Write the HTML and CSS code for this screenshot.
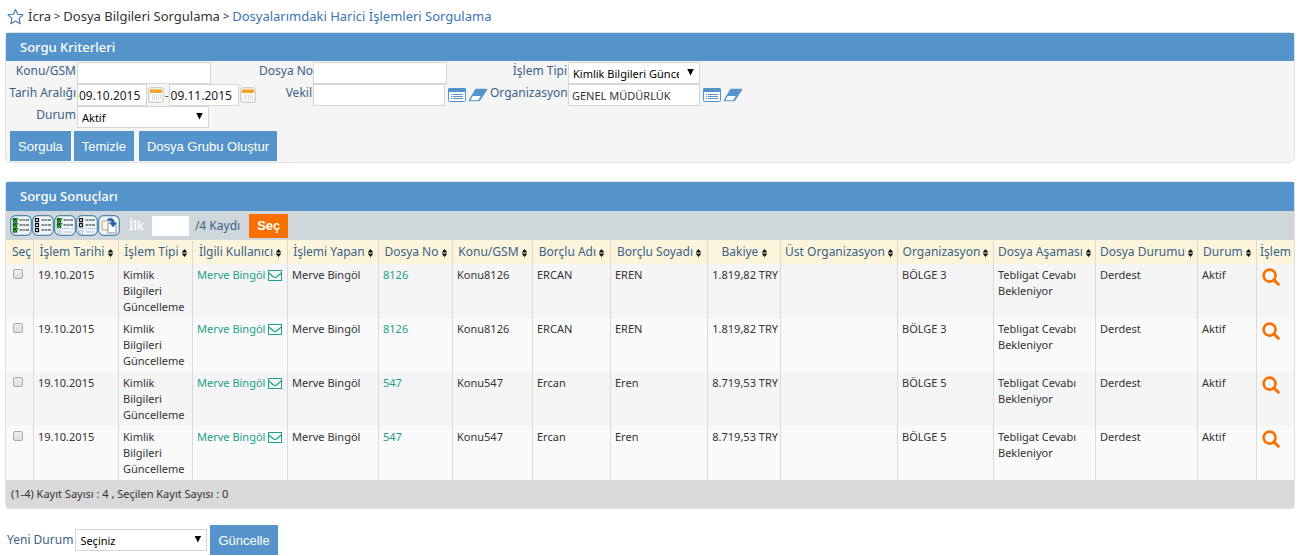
FILE: index.html
```html
<!DOCTYPE html>
<html lang="tr">
<head>
<meta charset="utf-8">
<title>Dosyalarımdaki Harici İşlemleri Sorgulama</title>
<link rel="stylesheet" href="styles.css">
</head>
<body>
<svg class="defs" aria-hidden="true">
  <symbol id="i-calendar" viewBox="0 0 16 16">
    <rect x=".5" y=".5" width="15" height="15" rx="2" fill="#ece8e2" stroke="#d3d0cb"/>
    <path d="M2 2h12v12H2z" fill="#fff"/><path d="M2 2h12v4H2z" fill="#f0a62c"/><path d="M2 2h12v1H2z" fill="#f8c56c"/>
    <path d="M4.500 7v6M6.500 7v6M8.500 7v6M10.500 7v6M12.500 7v6" stroke="#dfdcd8" stroke-width="1"/>
  </symbol>
  <symbol id="i-list" viewBox="0 0 18 14">
    <rect x=".5" y=".5" width="17" height="13" rx="1" fill="#fff" stroke="#5594ca"/>
    <path d="M0 1.500Q0 0 1.500 0h15Q18 0 18 1.500V4H0z" fill="#5594ca"/>
    <path d="M3 6.500h1M3 8.500h1M3 10.500h1M5 6.500h10M5 8.500h10M5 10.500h10" stroke="#5594ca"/>
  </symbol>
  <symbol id="i-eraser" viewBox="0 0 20 14">
    <path d="M8 .7h10.500q1.300 0 .6 1.200L12.500 12q-.8 1.300-2.300 1.300H1.300Q0 13.300.8 12L7 1.500Q7.500.7 8 .7z" fill="#5594ca"/>
    <path d="M4.800 8h8L10.500 11.700Q10.200 12.200 9.500 12.200H2.300z" fill="#fff"/>
  </symbol>
  <symbol id="i-mail" viewBox="0 0 14 12">
    <rect x=".5" y="1.500" width="13" height="10" fill="none" stroke="#22a085"/>
    <path d="M.8 4L5.500 8Q7 9 8.500 8L13.200 4" fill="none" stroke="#22a085" stroke-width="1.200"/>
  </symbol>
  <symbol id="i-search" viewBox="0 0 18 18">
    <circle cx="7.600" cy="7.600" r="6" fill="none" stroke="#fa7000" stroke-width="2.600"/>
    <path d="M12 12l4.300 4.300" stroke="#fa7000" stroke-width="3" stroke-linecap="round"/>
  </symbol>
  <symbol id="i-sort" viewBox="0 0 5 8"><path d="M0 3L2.500 0 5 3v.5H0zM0 5v-.5h5V5L2.500 8z" fill="#111"/></symbol>
  <symbol id="frame" viewBox="0 0 22 21">
    <rect x=".7" y=".7" width="20.600" height="19.600" rx="5" fill="#eff5fa" stroke="#4b86ad" stroke-width="1.200"/>
  </symbol>
  <symbol id="line-off" viewBox="0 0 18 5">
    <path d="M1.500.7h3v3h-3z" fill="#fff" stroke="#111" stroke-width="1.200"/>
    <path d="M7.500 2h3m.6 0h2m.6 0h3.300" stroke="#666" stroke-width="1.300"/>
  </symbol>
  <symbol id="line-on" viewBox="0 0 18 5">
    <path d="M.8.2h4.400v4.400H.8z" fill="#0d2e10"/><path d="M1.300 2l1.500 1.500L6.300 0" fill="none" stroke="#1bb51b" stroke-width="1.500"/>
    <path d="M7.500 2h3m.6 0h2m.6 0h3.300" stroke="#666" stroke-width="1.300"/>
  </symbol>
  <symbol id="line-faded" viewBox="0 0 18 5">
    <path d="M1.500.7h3v3h-3z" fill="#fff" stroke="#a9b9cb"/><path d="M7.500 2h9" stroke="#bdd0e4" stroke-width="1.200"/>
  </symbol>
</svg>

<nav class="crumbs" aria-label="Konum">
  <svg class="star" viewBox="0 0 18 17"><path d="M9 1l2.300 5.100 5.700.6-4.200 3.900 1.200 5.600L9 13.300 4 16.200l1.200-5.600L1 6.700l5.700-.6z" fill="none" stroke="#3a74b2" stroke-width="1.100" stroke-linejoin="round"/></svg>
  <span>İcra</span><span class="sep">&gt;</span><span>Dosya Bilgileri Sorgulama</span><span class="sep">&gt;</span><a href="#">Dosyalarımdaki Harici İşlemleri Sorgulama</a>
</nav>

<section class="panel criteria">
  <h2 class="panel-title">Sorgu Kriterleri</h2>
  <form>
    <div class="fields">
      <label for="konu">Konu/GSM</label>
      <div class="field"><input class="box wide" id="konu" type="text"></div>
      <label for="dosya">Dosya No</label>
      <div class="field"><input class="box wide" id="dosya" type="text"></div>
      <label for="tip">İşlem Tipi</label>
      <div class="field"><span class="pick"><select class="box" id="tip"><option>Kimlik Bilgileri Güncelleme</option></select></span></div>

      <label for="tarih">Tarih Aralığı</label>
      <div class="field dates">
        <input class="box date" id="tarih" type="text" value="09.10.2015">
        <button class="icon" type="button" aria-label="Başlangıç takvimi"><svg class="cal"><use href="#i-calendar"/></svg></button>
        <span>-</span>
        <input class="box date" type="text" value="09.11.2015" aria-label="Bitiş tarihi">
        <button class="icon" type="button" aria-label="Bitiş takvimi"><svg class="cal"><use href="#i-calendar"/></svg></button>
      </div>
      <label for="vekil">Vekil</label>
      <div class="field lookup">
        <input class="box" id="vekil" type="text">
        <button class="icon" type="button" aria-label="Vekil seç"><svg class="list"><use href="#i-list"/></svg></button>
        <button class="icon" type="button" aria-label="Vekil temizle"><svg class="eraser"><use href="#i-eraser"/></svg></button>
      </div>
      <label for="org">Organizasyon</label>
      <div class="field lookup">
        <input class="box" id="org" type="text" value="GENEL MÜDÜRLÜK">
        <button class="icon" type="button" aria-label="Organizasyon seç"><svg class="list"><use href="#i-list"/></svg></button>
        <button class="icon" type="button" aria-label="Organizasyon temizle"><svg class="eraser"><use href="#i-eraser"/></svg></button>
      </div>

      <label for="durum">Durum</label>
      <div class="field"><span class="pick"><select class="box" id="durum"><option>Aktif</option></select></span></div>
    </div>
    <div class="actions">
      <button class="btn" type="button">Sorgula</button>
      <button class="btn" type="button">Temizle</button>
      <button class="btn spaced" type="button">Dosya Grubu Oluştur</button>
    </div>
  </form>
</section>

<section class="panel results">
  <h2 class="panel-title tall">Sorgu Sonuçları</h2>
  <div class="toolbar">
    <div class="tools">
      <button class="icon" type="button" aria-label="Tümünü seç"><svg class="tool" viewBox="0 0 22 21"><use href="#frame"/><use href="#line-on" x="2" y="3" width="18" height="5"/><use href="#line-on" x="2" y="8" width="18" height="5"/><use href="#line-on" x="2" y="13" width="18" height="5"/></svg></button>
      <button class="icon" type="button" aria-label="Tümünü bırak"><svg class="tool" viewBox="0 0 22 21"><use href="#frame"/><use href="#line-off" x="2" y="3" width="18" height="5"/><use href="#line-off" x="2" y="8" width="18" height="5"/><use href="#line-off" x="2" y="13" width="18" height="5"/></svg></button>
      <button class="icon" type="button" aria-label="Sayfayı seç"><svg class="tool" viewBox="0 0 22 21"><use href="#frame"/><use href="#line-on" x="2" y="3" width="18" height="5"/><use href="#line-on" x="2" y="8" width="18" height="5"/><path d="M2 13.500h18" stroke="#80b0e0" stroke-dasharray="1 1"/><use href="#line-faded" x="2" y="15" width="18" height="5"/></svg></button>
      <button class="icon" type="button" aria-label="Sayfayı bırak"><svg class="tool" viewBox="0 0 22 21"><use href="#frame"/><use href="#line-off" x="2" y="3" width="18" height="5"/><use href="#line-off" x="2" y="8" width="18" height="5"/><path d="M2 13.500h18" stroke="#80b0e0" stroke-dasharray="1 1"/><use href="#line-faded" x="2" y="15" width="18" height="5"/></svg></button>
      <button class="icon" type="button" aria-label="Seçimi çevir"><svg class="tool" viewBox="0 0 22 21"><use href="#frame"/><path d="M4 6h7v9H4z" fill="#fbf6e4" stroke="#b9a98a"/><path d="M10 8h8v10h-8z" fill="#fff" stroke="#8590a8"/><path d="M9 5c3-3 7-2 7.500 3h2L15 12l-3-4h2c0-2-2-3-5-3z" fill="#2c65b8" stroke="#1d4c99" stroke-width=".6"/></svg></button>
    </div>
    <label class="first" for="ilk">İlk</label>
    <input class="count" id="ilk" type="text">
    <span class="total">/4 Kaydı</span>
    <button class="btn go" type="button">Seç</button>
  </div>
  <table>
    <colgroup><col class="c-sel"><col class="c-date"><col class="c-tip"><col class="c-kul"><col class="c-yapan"><col class="c-tip"><col class="c-konu"><col class="c-ad"><col class="c-soyad"><col class="c-bakiye"><col class="c-ust"><col class="c-org"><col class="c-asama"><col class="c-asama"><col class="c-durum"><col class="c-islem"></colgroup>
    <thead><tr>
      <th>Seç</th>
      <th>İşlem Tarihi <svg><use href="#i-sort"/></svg></th>
      <th>İşlem Tipi <svg><use href="#i-sort"/></svg></th>
      <th>İlgili Kullanıcı <svg><use href="#i-sort"/></svg></th>
      <th>İşlemi Yapan <svg><use href="#i-sort"/></svg></th>
      <th>Dosya No <svg><use href="#i-sort"/></svg></th>
      <th>Konu/GSM <svg><use href="#i-sort"/></svg></th>
      <th>Borçlu Adı <svg><use href="#i-sort"/></svg></th>
      <th>Borçlu Soyadı <svg><use href="#i-sort"/></svg></th>
      <th>Bakiye <svg><use href="#i-sort"/></svg></th>
      <th>Üst Organizasyon <svg><use href="#i-sort"/></svg></th>
      <th>Organizasyon <svg><use href="#i-sort"/></svg></th>
      <th>Dosya Aşaması <svg><use href="#i-sort"/></svg></th>
      <th>Dosya Durumu <svg><use href="#i-sort"/></svg></th>
      <th>Durum <svg><use href="#i-sort"/></svg></th>
      <th>İşlem</th>
    </tr></thead>
    <tbody>
      <tr><td class="sel"><input type="checkbox" aria-label="Kayıt 1"></td><td>19.10.2015</td><td>Kimlik Bilgileri Güncelleme</td><td class="user"><a href="#">Merve Bingöl <svg><use href="#i-mail"/></svg></a></td><td>Merve Bingöl</td><td><a href="#">8126</a></td><td>Konu8126</td><td>ERCAN</td><td>EREN</td><td class="num">1.819,82 TRY</td><td></td><td>BÖLGE 3</td><td>Tebligat Cevabı Bekleniyor</td><td>Derdest</td><td>Aktif</td><td><button class="icon" type="button" aria-label="İncele"><svg class="search"><use href="#i-search"/></svg></button></td></tr>
      <tr><td class="sel"><input type="checkbox" aria-label="Kayıt 2"></td><td>19.10.2015</td><td>Kimlik Bilgileri Güncelleme</td><td class="user"><a href="#">Merve Bingöl <svg><use href="#i-mail"/></svg></a></td><td>Merve Bingöl</td><td><a href="#">8126</a></td><td>Konu8126</td><td>ERCAN</td><td>EREN</td><td class="num">1.819,82 TRY</td><td></td><td>BÖLGE 3</td><td>Tebligat Cevabı Bekleniyor</td><td>Derdest</td><td>Aktif</td><td><button class="icon" type="button" aria-label="İncele"><svg class="search"><use href="#i-search"/></svg></button></td></tr>
      <tr><td class="sel"><input type="checkbox" aria-label="Kayıt 3"></td><td>19.10.2015</td><td>Kimlik Bilgileri Güncelleme</td><td class="user"><a href="#">Merve Bingöl <svg><use href="#i-mail"/></svg></a></td><td>Merve Bingöl</td><td><a href="#">547</a></td><td>Konu547</td><td>Ercan</td><td>Eren</td><td class="num">8.719,53 TRY</td><td></td><td>BÖLGE 5</td><td>Tebligat Cevabı Bekleniyor</td><td>Derdest</td><td>Aktif</td><td><button class="icon" type="button" aria-label="İncele"><svg class="search"><use href="#i-search"/></svg></button></td></tr>
      <tr><td class="sel"><input type="checkbox" aria-label="Kayıt 4"></td><td>19.10.2015</td><td>Kimlik Bilgileri Güncelleme</td><td class="user"><a href="#">Merve Bingöl <svg><use href="#i-mail"/></svg></a></td><td>Merve Bingöl</td><td><a href="#">547</a></td><td>Konu547</td><td>Ercan</td><td>Eren</td><td class="num">8.719,53 TRY</td><td></td><td>BÖLGE 5</td><td>Tebligat Cevabı Bekleniyor</td><td>Derdest</td><td>Aktif</td><td><button class="icon" type="button" aria-label="İncele"><svg class="search"><use href="#i-search"/></svg></button></td></tr>
    </tbody>
  </table>
  <p class="summary">(1-4) Kayıt Sayısı : 4 , Seçilen Kayıt Sayısı : 0</p>
</section>

<form class="update">
  <label for="yeni">Yeni Durum</label>
  <span class="pick"><select class="box" id="yeni"><option>Seçiniz</option></select></span>
  <button class="btn" type="button">Güncelle</button>
</form>
</body>
</html>
```
FILE: styles.css
```css
* { box-sizing: border-box; }
body {
  margin: 0;
  padding: 0 8px 0 5px;
  background: #fff;
  color: #333;
  font: 11px/16px "Noto Sans", sans-serif;
}
svg { display: block; }
a { color: #22a085; text-decoration: none; }
label { color: #3b6288; font-size: 12px; }
.defs { position: absolute; width: 0; height: 0; }

.crumbs {
  display: flex;
  align-items: center;
  gap: 3px;
  height: 32px;
  padding-left: 2px;
  font-size: 13px;
}
.crumbs a { color: #3a74b2; }
.sep { font-size: 11px; }
.star { width: 17px; height: 17px; margin-right: 1px; }

.panel {
  border: 1px solid #e0e0e0;
  border-radius: 6px;
  background: #f5f5f5;
}
.panel-title {
  margin: 0;
  padding-left: 14px;
  background: #5594ca;
  color: #fff;
  font-size: 13px;
  font-weight: 500;
  line-height: 28px;
}
.panel-title.tall { line-height: 29px; }

.fields {
  display: grid;
  grid-template-columns: 70px 181px 53px 176px 77px auto;
  grid-auto-rows: 22px;
  justify-content: start;
  column-gap: 1px;
  padding-top: 1px;
}
.fields label { line-height: 18px; text-align: right; white-space: nowrap; }
.field { display: flex; align-items: center; }
.box {
  width: 132px;
  height: 22px;
  padding: 1px 3px 0;
  border: 1px solid #d6d6d6;
  border-radius: 0;
  background: #fff;
  color: #333;
  font: 11px "Noto Sans", sans-serif;
}
.box.wide { width: 134px; }
.box.date { width: 70px; padding: 1px; color: #222; font-size: 12px; }
.dates .icon { padding: 0 1px; }
.lookup .icon { margin-left: 3px; }
.lookup .icon + .icon { margin-left: 2px; }
.icon { padding: 0; border: 0; background: none; cursor: pointer; }
.cal { width: 16px; height: 16px; }
.list { width: 18px; height: 14px; }
.eraser { width: 20px; height: 14px; }
.pick { display: inline-grid; align-items: center; }
.pick > *, .pick::after { grid-area: 1 / 1; }
.pick::after {
  content: "";
  width: 7px;
  height: 7px;
  margin: 0 6px 2px 0;
  justify-self: end;
  background: #000;
  clip-path: polygon(0 0, 100% 0, 50% 100%);
  pointer-events: none;
}
.pick .box { padding: 1px 20px 0 4px; color: #000; appearance: none; }

.actions { display: flex; gap: 3px; padding: 3px 4px 1px; }
.btn {
  height: 30px;
  padding: 0 8px;
  border: 0;
  background: #5594ca;
  color: #fff;
  font: 13px "Liberation Sans", Arial, sans-serif;
  cursor: pointer;
}
.btn.spaced { margin-left: 2px; }

.results { margin-top: 18px; }
.toolbar {
  display: flex;
  align-items: center;
  height: 29px;
  padding: 0 4px;
  background: #cfd7da;
  font-size: 12px;
}
.tools { display: flex; }
.tool { width: 22px; height: 21px; }
.first { margin: 0 8px 0 9px; color: #fff; font-weight: 600; }
.count { width: 37px; height: 20px; padding: 2px; border: 0; background: #fff; font: inherit; }
.total { margin: 0 9px 0 6px; color: #3b6288; }
.btn.go { height: 24px; background: #fa7000; font-weight: 700; }

table { width: 100%; table-layout: fixed; border-collapse: separate; border-spacing: 0; }
th, td { border-left: 1px solid #dadada; text-align: left; vertical-align: top; }
th:first-child, td:first-child { border-left: 0; }
th {
  height: 24px;
  padding: 0 1px;
  background: #fcf5dc;
  color: #3b6288;
  font-size: 12px;
  font-weight: 400;
  line-height: 24px;
  text-align: center;
  white-space: nowrap;
}
th:first-child { padding: 0 0 0 4px; }
th:last-child { padding: 0; }
th svg { display: inline-block; width: 5px; height: 8px; vertical-align: -1px; }
td { height: 54px; padding: 3px 2px 3px 4px; }
tbody tr:nth-child(even) { background: #fafafa; }
.sel { padding: 5px 7px; }
.sel input {
  display: block;
  width: 10px;
  height: 10px;
  margin: 0;
  border: 1px solid #aaa;
  border-radius: 2px;
  background: linear-gradient(#eee, #ddd);
  appearance: none;
}
.user { white-space: nowrap; }
.user svg { display: inline-block; width: 14px; height: 12px; vertical-align: -2px; }
.num { text-align: right; }
.search { width: 18px; height: 18px; }
td:last-child { padding-top: 4px; padding-left: 5px; }
.c-sel { width: 27px; }
.c-date { width: 85px; }
.c-tip { width: 74px; }
.c-kul { width: 95px; }
.c-yapan { width: 91px; }
.c-konu { width: 80px; }
.c-ad { width: 78px; }
.c-soyad { width: 97px; }
.c-bakiye { width: 73px; }
.c-ust { width: 117px; }
.c-org { width: 96px; }
.c-asama { width: 102px; }
.c-durum { width: 59px; }
.c-islem { width: 38px; }
.summary { margin: 0; padding-left: 5px; background: #d9d9d9; line-height: 28px; }

.update { display: flex; align-items: center; gap: 2px; margin-top: 16px; padding-left: 2px; }
.update .btn { margin-left: 1px; }
```
